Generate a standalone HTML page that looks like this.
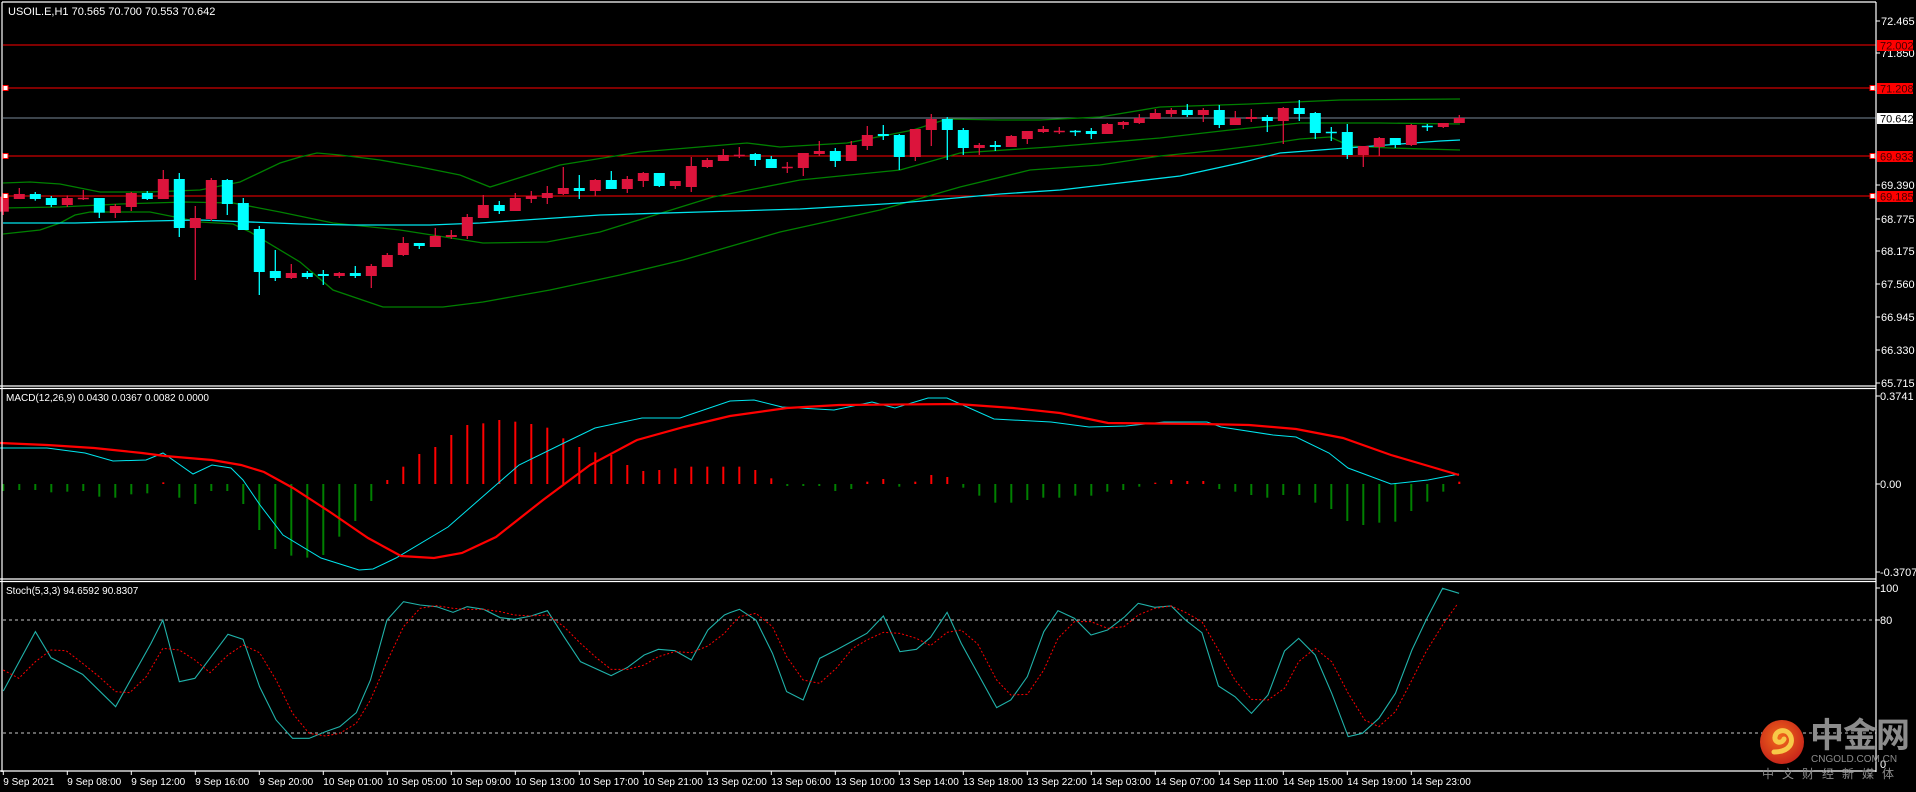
<!DOCTYPE html>
<html><head><meta charset="utf-8"><style>
html,body{margin:0;padding:0;background:#000;width:1916px;height:792px;overflow:hidden}
svg{position:absolute;left:0;top:0}
svg text{font-family:"Liberation Sans",sans-serif;font-size:11px;fill:#fff}
.lg{position:absolute;font-family:"Liberation Sans","Noto Sans CJK SC",sans-serif;color:#8c8c8c}
</style></head><body>
<svg id="s" width="1916" height="792" xmlns="http://www.w3.org/2000/svg">
<rect width="1916" height="792" fill="#000"/>
<g id="g"></g>
<!-- frames -->
<g stroke="#fff" stroke-width="1.2" fill="none">
<line x1="2" y1="2" x2="1876" y2="2"/>
<line x1="2" y1="2" x2="2" y2="772"/>
<line x1="1876" y1="2" x2="1876" y2="772"/>
<line x1="0" y1="386" x2="1876" y2="386"/><line x1="0" y1="388.5" x2="1876" y2="388.5"/>
<line x1="0" y1="579" x2="1876" y2="579"/><line x1="0" y1="581.5" x2="1876" y2="581.5"/>
<line x1="0" y1="771" x2="1876" y2="771"/>
</g>
<text x="8" y="15">USOIL.E,H1  70.565 70.700 70.553 70.642</text>
<text x="6" y="401" style="font-size:10px">MACD(12,26,9) 0.0430 0.0367 0.0082 0.0000</text>
<text x="6" y="594" style="font-size:10px">Stoch(5,3,3) 94.6592 90.8307</text>
<g id="ax"></g>
<text x="1881" y="25">72.465</text>
<text x="1881" y="57">71.850</text>
<text x="1881" y="189">69.390</text>
<text x="1881" y="223">68.775</text>
<text x="1881" y="255">68.175</text>
<text x="1881" y="288">67.560</text>
<text x="1881" y="321">66.945</text>
<text x="1881" y="354">66.330</text>
<text x="1881" y="387">65.715</text>
<rect x="1877" y="40" width="36" height="11" fill="#f00"/><text x="1880" y="49.5" fill="#400" style="fill:#400">72.002</text>
<rect x="1877" y="83" width="36" height="11" fill="#f00"/><text x="1880" y="92.5" style="fill:#400">71.208</text>
<rect x="1877" y="113" width="36" height="11" fill="#fff"/><text x="1880" y="122.5" style="fill:#000">70.642</text>
<rect x="1877" y="151" width="36" height="11" fill="#f00"/><text x="1880" y="160.5" style="fill:#400">69.933</text>
<rect x="1877" y="191" width="36" height="11" fill="#f00"/><text x="1880" y="200.5" style="fill:#400">69.185</text>
<text x="1880" y="400">0.3741</text>
<text x="1880" y="488">0.00</text>
<text x="1880" y="576">-0.3707</text>
<text x="1880" y="592">100</text>
<text x="1880" y="624">80</text>
<text x="1880" y="768">0</text>
<g id="tl"></g>
<!-- logo -->
<defs><radialGradient id="lgc" cx="0.45" cy="0.4" r="0.6"><stop offset="0" stop-color="#f26a1b"/><stop offset="1" stop-color="#c8261a"/></radialGradient></defs>
<circle cx="1782" cy="742" r="22" fill="url(#lgc)"/>
<path d="M1774 752 C1790 752 1794 742 1790 735 C1786 728 1776 730 1775 737 C1774 743 1782 744 1784 739" stroke="#f7c948" stroke-width="5" fill="none" stroke-linecap="round"/>
</svg>
<div class="lg" style="left:1810px;top:718px;font-size:34px;font-weight:bold;letter-spacing:-1px;line-height:36px">中金网</div>
<div class="lg" style="left:1811px;top:754px;font-size:10px;line-height:11px">CNGOLD.COM.CN</div>
<div class="lg" style="left:1762px;top:767px;font-size:12px;letter-spacing:8px;line-height:14px">中文财经新媒体</div>
<script>
const NS="http://www.w3.org/2000/svg",G=document.getElementById('g');
function el(t,a,p){const e=document.createElementNS(NS,t);for(const k in a)e.setAttribute(k,a[k]);(p||G).appendChild(e);return e;}
function poly(pts,c,w,extra){let a={points:pts.map(p=>p.join(',')).join(' '),fill:'none',stroke:c,'stroke-width':w};Object.assign(a,extra||{});el('polyline',a);}
// horizontal lines
el('line',{x1:3,y1:45,x2:1876,y2:45,stroke:'#f00','stroke-width':1});
[88,156,196].forEach(y=>el('line',{x1:3,y1:y,x2:1876,y2:y,stroke:'#f00','stroke-width':1}));
el('line',{x1:3,y1:118,x2:1876,y2:118,stroke:'#778899','stroke-width':1});
// bands
const up=[[3,183],[30,182],[60,184],[100,192],[150,192],[200,190],[240,182],[280,163],[300,157],[317,153],[340,155],[380,160],[420,167],[460,175],[490,187],[560,165],[640,152],[747,143],[780,147],[847,143],[913,130],[947,119],[1000,120],[1040,120],[1100,117],[1160,107],[1250,104],[1340,100],[1460,99]];
const mid=[[3,208],[60,207],[120,204],[185,202],[233,203],[280,212],[333,223],[400,230],[483,243],[547,242],[600,232],[713,197],[800,180],[900,170],[960,153],[1050,147],[1160,138],[1230,130],[1300,123],[1340,123],[1380,123],[1460,124]];
const lo=[[3,234],[40,230],[60,223],[75,215],[90,212],[150,212],[200,222],[233,224],[250,232],[300,262],[333,290],[383,307],[443,307],[483,302],[550,290],[620,275],[683,260],[780,232],[880,210],[960,187],[1030,170],[1100,165],[1160,156],[1220,150],[1260,145],[1300,139],[1330,137],[1350,146],[1390,148],[1460,150]];
const ma=[[3,223],[75,223],[150,221],[200,220],[300,224],[350,225],[430,225],[480,223],[600,215],[700,212],[800,209],[900,203],[1000,194],[1060,190],[1120,183],[1180,176],[1240,163],[1280,153],[1320,150],[1360,147],[1400,144],[1440,141],[1460,140]];
poly(up,'#008000',1.3);poly(mid,'#008000',1.3);poly(lo,'#008000',1.3);poly(ma,'#00e5ee',1.3);
// candles
const A=[[140,185,140,195,1],[132,147,114,147,1],[132,147,126,152,0],[144,165,138,171,0],[144,165,136,171,1],[144,147,120,150,1],[144,188,144,204,0],[168,189,162,204,1],[129,171,126,183,1],[129,147,123,150,0],[87,147,60,147,1],[87,234,69,261,0],[204,234,168,390,1],[90,207,84,213,1],[90,162,87,195,0],[159,240,144,240,0],[237,366,228,435,0],[363,384,300,393,0],[369,384,342,387,1],[369,381,363,387,0],[372,378,360,405,0],[369,378,366,384,1],[369,378,348,384,0],[348,378,342,414,1],[315,351,309,351,1],[279,315,261,318,1],[279,288,279,297,0],[258,291,234,291,1],[255,261,240,267,1],[201,258,192,267,1],[165,204,135,204,1],[165,183,153,192,0]];
const B=[[324,363,309,363,1],[318,327,303,339,1],[309,324,288,342,1],[294,312,231,315,1],[294,303,255,327,0],[270,303,267,318,1],[270,297,243,297,0],[267,297,258,309,1],[249,273,246,291,1],[249,288,249,291,0],[273,288,273,297,1],[228,291,201,306,1],[210,231,204,234,1],[195,213,177,213,1],[195,198,171,204,1],[192,210,189,228,0],[207,234,198,234,0],[231,233,216,249,1],[189,234,189,258,1],[183,192,153,198,1],[183,213,174,231,0],[165,213,153,213,1],[135,168,108,180,1],[132,138,105,150,0],[135,201,132,240,0],[117,201,117,213,1],[87,120,72,168,1],[87,120,81,210,0],[120,174,114,195,0],
[165,174,159,195,1],[165,171,153,183,0],[138,171,135,171,1],[123,147,123,162,1],[117,126,108,129,1],[123,126,111,132,1],[123,126,120,138,0],[123,132,114,147,0],[102,132,99,132,1],[96,105,93,117,1],[84,99,72,102,1],[69,87,57,87,1],[60,72,54,81,1],[60,75,42,81,0],[60,75,54,96,1],[60,105,45,114,0],[84,105,63,105,1],[81,87,57,96,1],[81,93,75,126,0],[54,93,51,162,1],[54,72,30,93,0],[69,129,66,147,0],[126,129,111,153,0],[126,195,102,207,0],[168,195,168,231,1],[144,171,141,198,1],[144,165,144,174,0],[105,165,102,168,1],[108,111,102,123,0],[99,111,99,114,1],[84,99,75,99,1]];
function candle(i,d,off){const cx=3.3+16*i,c=d[4]?'#dc143c':'#00ffff';
 el('line',{x1:cx,y1:off+d[2]/3,x2:cx,y2:off+d[3]/3,stroke:c,'stroke-width':1.3});
 let t=off+d[0]/3,b=off+d[1]/3;if(b-t<1.5){el('line',{x1:cx-5.5,y1:t+0.5,x2:cx+5.5,y2:t+0.5,stroke:c,'stroke-width':1.5});}
 else el('rect',{x:cx-5.5,y:t,width:11,height:b-t,fill:c});}
A.forEach((d,i)=>candle(i,d,150));B.forEach((d,i)=>candle(i+32,d,90));
// markers
[88,156,196].forEach(y=>{el('rect',{x:3,y:y-2.5,width:5,height:5,fill:'#fff',stroke:'#f00','stroke-width':1});el('rect',{x:1870,y:y-2.5,width:5,height:5,fill:'#fff',stroke:'#f00','stroke-width':1});});
// MACD hist
const H=[318,315,315,322,320,318,335,338,328,325,292,338,357,318,318,357,435,492,512,518,510,455,408,348,285,245,207,186,150,120,115,105,110,117,128,160,186,202,210,240,258,255,250,245,245,245,245,255,280,303,303,303,318,312,290,282,305,290,270,276,308,332,353,353,345,338,338,332,332,320,315,305,293,285,288,288,312,320,330,338,330,330,353,372,408,420,413,410,378,350,320,290];
H.forEach((z,i)=>{const cx=3.3+16*i,y=385+z/3,b=484;el('line',{x1:cx,y1:b,x2:cx,y2:y,stroke:y<b?'#f00':'#008000','stroke-width':2});});
poly([[0,448],[47,448],[85,453],[113,461],[146,460],[163,453],[193,474],[212,465],[231,468],[243,480],[260,505],[283,535],[321,558],[359,570],[373,569],[396,558],[448,527],[496,485],[519,465],[566,442],[595,428],[642,418],[680,418],[730,401],[754,400],[782,407],[834,410],[872,402],[895,408],[928,398],[947,398],[994,419],[1051,422],[1089,427],[1126,426],[1164,422],[1207,422],[1221,427],[1273,435],[1296,437],[1329,453],[1348,468],[1391,484],[1428,480],[1459,474]],'#00e5ee',1);
poly([[0,443],[47,445],[94,448],[142,453],[165,456],[212,460],[241,465],[264,472],[293,488],[330,512],[368,538],[401,556],[434,558],[462,553],[496,537],[543,500],[590,465],[637,440],[684,427],[730,416],[787,408],[839,405],[957,404],[1013,408],[1060,413],[1108,423],[1202,424],[1249,425],[1296,429],[1343,438],[1391,455],[1459,475]],'#f00',2.2);
// stoch levels
[620,733].forEach(y=>el('line',{x1:3,y1:y,x2:1876,y2:y,stroke:'#c8c8c8','stroke-width':1,'stroke-dasharray':'3,3'}));
const k=2.119;
const s1=[[7,333],[75,155],[108,233],[175,283],[245,380],[320,190],[345,120],[380,305],[413,295],[483,163],[515,178],[550,320],[585,420],[620,475],[655,475],[690,455],[720,440],[755,398],[785,300],[820,120],[855,65],[890,75],[925,80],[960,97],[990,80],[1025,88],[1060,113],[1090,118],[1125,108],[1160,92],[1195,170],[1230,245],[1295,287],[1330,262],[1365,225],[1395,208],[1430,212],[1465,240],[1500,150],[1535,105]].map(p=>[p[0]/k,580+p[1]/3]);
const s2=[[0,98],[20,88],[55,120],[90,220],[120,335],[155,360],[190,235],[225,210],[290,160],[325,108],[360,215],[395,208],[425,172],[460,97],[490,190],[525,280],[565,383],[595,360],[630,290],[665,155],[695,92],[730,115],[765,165],[800,150],[835,112],[865,70],[900,82],[935,78],[965,120],[1000,158],[1035,318],[1070,350],[1105,400],[1140,345],[1175,213],[1205,175],[1240,225],[1275,340],[1310,470],[1340,460],[1375,415],[1410,340],[1445,210],[1475,120],[1510,25],[1545,40]].map(p=>[730+p[0]/k,580+p[1]/3]);
poly(s1.concat(s2),'#20b2aa',1.1);
const r1=[[7,270],[40,295],[75,245],[108,210],[140,212],[175,250],[210,290],[245,335],[275,338],[310,290],[345,205],[380,210],[413,240],[445,278],[483,225],[515,195],[550,218],[585,300],[620,400],[655,460],[690,468],[720,460],[755,430],[785,360],[820,245],[855,140],[890,85],[925,77],[960,85],[990,88],[1025,88],[1060,95],[1090,105],[1125,108],[1160,105],[1195,140],[1230,190],[1265,235],[1295,268],[1330,268],[1365,255],[1395,230],[1430,215],[1465,218],[1500,198],[1535,160]].map(p=>[p[0]/k,580+p[1]/3]);
const r2=[[0,140],[20,110],[55,100],[90,140],[120,230],[155,300],[190,310],[225,265],[260,205],[290,180],[325,157],[360,160],[395,175],[425,197],[460,157],[490,150],[525,192],[565,300],[595,345],[630,343],[665,270],[695,175],[730,125],[765,125],[800,145],[835,140],[865,105],[900,85],[935,78],[965,97],[1000,125],[1035,210],[1070,300],[1105,358],[1140,360],[1175,325],[1205,245],[1240,205],[1275,245],[1310,340],[1345,420],[1375,440],[1410,395],[1445,300],[1475,215],[1510,135],[1540,75]].map(p=>[730+p[0]/k,580+p[1]/3]);
poly(r1.concat(r2),'#f00',1,{'stroke-dasharray':'2,2'});
// axis ticks
const AX=document.getElementById('ax');
[21,53,185,219,251,284,317,350,383,396,484,572,588,620].forEach(y=>el('line',{x1:1876,y1:y,x2:1880,y2:y,stroke:'#fff','stroke-width':1},AX));
// time labels
const TL=document.getElementById('tl');
const L=["9 Sep 2021","9 Sep 08:00","9 Sep 12:00","9 Sep 16:00","9 Sep 20:00","10 Sep 01:00","10 Sep 05:00","10 Sep 09:00","10 Sep 13:00","10 Sep 17:00","10 Sep 21:00","13 Sep 02:00","13 Sep 06:00","13 Sep 10:00","13 Sep 14:00","13 Sep 18:00","13 Sep 22:00","14 Sep 03:00","14 Sep 07:00","14 Sep 11:00","14 Sep 15:00","14 Sep 19:00","14 Sep 23:00"];
L.forEach((t,i)=>{const x=3.3+64*i;el('line',{x1:x,y1:771,x2:x,y2:775,stroke:'#fff','stroke-width':1},TL);const e=el('text',{x:x,y:785,style:'font-size:10px'},TL);e.textContent=t;});
</script>
</body></html>
